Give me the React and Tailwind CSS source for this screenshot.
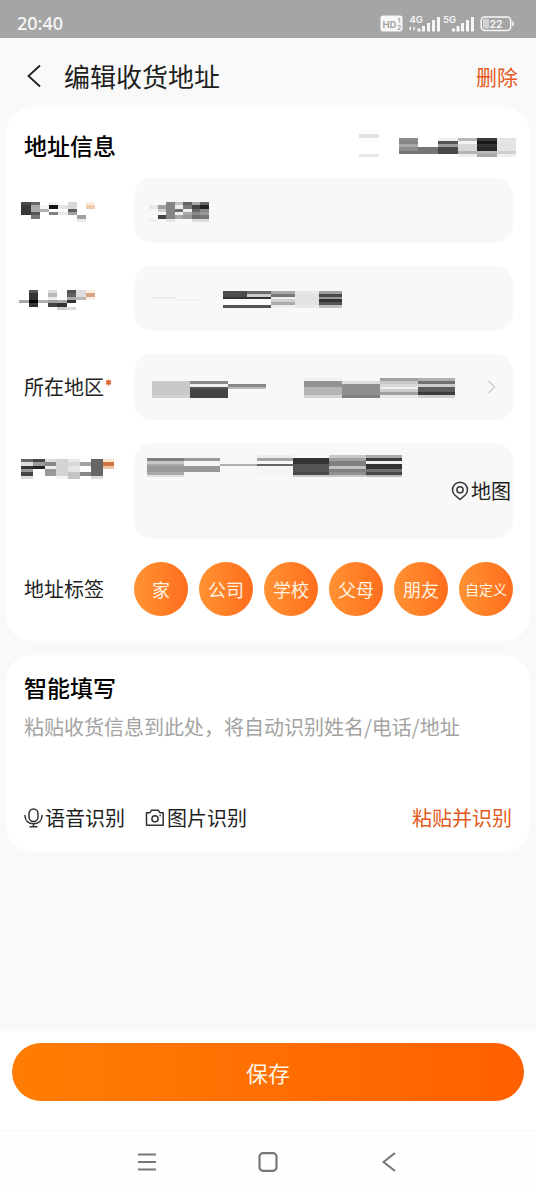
import React from 'react';

// Each block is [left, right, [[top, bottom, shade], ...]] on its own drawing grid.
const HEADER_BLOCKS = [
  [359, 379, [[133, 137, '#e2e2e2'], [153, 156, '#e8e8e8']]],
  [399, 418, [[137, 140, '#8c8c8c'], [140, 143, '#838383'], [143, 146, '#a8a8a8'], [146, 150, '#8c8c8c'], [150, 153, '#757575']]],
  [418, 438, [[146, 153, '#757575']]],
  [438, 458, [[137, 140, '#eeeeee'], [140, 143, '#555555'], [143, 146, '#9c9c9c'], [146, 153, '#484848']]],
  [458, 477, [[137, 140, '#b8b8b8'], [140, 143, '#f2f2f2'], [143, 150, '#d8d8d8'], [150, 153, '#b4b4b4'], [153, 156, '#ececec']]],
  [477, 497, [[137, 140, '#383838'], [140, 143, '#181818'], [143, 146, '#333333'], [146, 150, '#282828'], [150, 153, '#b8b8b8'], [153, 156, '#a8a8a8']]],
  [497, 516, [[137, 150, '#e4e4e4'], [150, 153, '#d0d0d0'], [153, 156, '#eeeeee']]],
];

const NAME_LABEL = [
  [21, 31, [[202, 205, '#4a4a4a'], [205, 215, '#383838']]],
  [31, 40, [[202, 205, '#666666'], [205, 212, '#aaaaaa'], [212, 215, '#555555'], [215, 219, '#777777']]],
  [40, 49, [[205, 209, '#f5f5f5'], [209, 212, '#b0b0b0']]],
  [49, 58, [[202, 205, '#eeeeee'], [205, 209, '#111111'], [212, 215, '#808080']]],
  [58, 68, [[205, 209, '#e5e5e5'], [212, 215, '#e8e8e8']]],
  [68, 77, [[202, 209, '#d8d8d8'], [209, 212, '#606060'], [212, 215, '#a0a0a0']]],
  [77, 86, [[215, 219, '#a0a0a0'], [219, 222, '#eaeaea']]],
  [86, 95, [[202, 205, '#fbeee0'], [205, 209, '#f0ccaa']]],
];

const NAME_VALUE = [
  [149, 158, [[205, 209, '#e8e8e8'], [219, 222, '#eeeeee']]],
  [158, 166, [[205, 209, '#a0a0a0'], [209, 212, '#d0d0d0'], [215, 219, '#444444']]],
  [166, 175, [[202, 219, '#858585'], [219, 222, '#e5e5e5']]],
  [175, 183, [[202, 205, '#c0c0c0'], [205, 209, '#eeeeee'], [209, 212, '#707070'], [212, 215, '#eeeeee'], [215, 219, '#a8a8a8']]],
  [183, 192, [[202, 205, '#606060'], [205, 209, '#777777'], [209, 212, '#eeeeee'], [212, 215, '#aaaaaa'], [215, 219, '#999999']]],
  [192, 200, [[202, 205, '#aaaaaa'], [205, 209, '#444444'], [209, 212, '#666666'], [212, 215, '#888888'], [215, 219, '#707070'], [219, 222, '#dddddd']]],
  [200, 209, [[202, 205, '#666666'], [205, 209, '#222222'], [209, 212, '#888888'], [212, 215, '#999999'], [215, 219, '#777777'], [219, 222, '#dddddd']]],
];

const PHONE_LABEL = [
  [19, 29, [[300, 303, '#a8a8a8']]],
  [29, 38, [[290, 293, '#555555'], [293, 300, '#333333'], [300, 303, '#000000'], [303, 307, '#333333']]],
  [38, 48, [[300, 303, '#b0b0b0']]],
  [48, 57, [[290, 293, '#dddddd'], [293, 297, '#b8b8b8'], [297, 300, '#ececec'], [300, 303, '#a0a0a0'], [303, 307, '#444444']]],
  [57, 67, [[300, 303, '#a8a8a8'], [303, 307, '#333333'], [307, 310, '#cccccc']]],
  [67, 76, [[290, 293, '#505050'], [293, 297, '#606060'], [297, 300, '#aaaaaa'], [300, 303, '#333333'], [307, 310, '#d8d8d8']]],
  [76, 86, [[290, 297, '#dddddd'], [297, 300, '#b8b8b8']]],
  [86, 95, [[290, 293, '#fdeee2'], [293, 297, '#dba585'], [297, 300, '#fdeee2']]],
];

const PHONE_VALUE = [
  [151, 175, [[297, 299, '#eaeaea']]],
  [175, 199, [[299, 301, '#f2f2f2']]],
  [223, 247, [[291, 297, '#4c4c4c'], [297, 299, '#333333'], [299, 305, '#fdfbfc'], [305, 308, '#555555']]],
  [247, 271, [[291, 294, '#6a6a6a'], [294, 297, '#cccccc'], [297, 299, '#333333'], [299, 305, '#fdfbfc'], [305, 308, '#555555']]],
  [271, 295, [[291, 294, '#aaaaaa'], [294, 297, '#777777'], [297, 299, '#eeeeee'], [299, 302, '#d0d0d0'], [302, 305, '#aaaaaa'], [305, 308, '#eeeeee']]],
  [295, 319, [[291, 294, '#e8e8e8'], [294, 305, '#e2e2e2'], [305, 308, '#e8e8e8']]],
  [319, 342, [[291, 294, '#a0a0a0'], [294, 297, '#484848'], [297, 299, '#999999'], [299, 302, '#333333'], [302, 305, '#555555'], [305, 308, '#c0c0c0']]],
];

const REGION_VALUE = [
  [152, 190, [[381, 384, '#cccccc'], [384, 395, '#c8c8c8'], [395, 398, '#d2d2d2']]],
  [190, 228, [[381, 384, '#888888'], [384, 387, '#eeeeee'], [387, 389, '#555555'], [389, 398, '#444444']]],
  [228, 266, [[384, 387, '#888888'], [387, 389, '#b8b8b8']]],
  [304, 342, [[378, 381, '#f0f0f0'], [381, 387, '#939393'], [387, 395, '#b4b4b4'], [395, 398, '#d2d2d2']]],
  [342, 380, [[381, 384, '#dddddd'], [384, 395, '#8e8e8e'], [395, 398, '#808080']]],
  [380, 418, [[378, 381, '#a0a0a0'], [381, 384, '#c8c8c8'], [384, 387, '#d8d8d8'], [387, 389, '#eeeeee'], [389, 392, '#cccccc'], [392, 395, '#a0a0a0'], [395, 398, '#e8e8e8']]],
  [418, 455, [[378, 381, '#b0b0b0'], [381, 384, '#707070'], [384, 387, '#cccccc'], [387, 392, '#5c5c5c'], [392, 395, '#3c3c3c'], [395, 398, '#d0d0d0']]],
];

const DETAIL_LABEL = [
  [21, 33, [[459, 462, '#666666'], [462, 466, '#dddddd'], [466, 469, '#333333'], [469, 472, '#999999'], [472, 476, '#444444'], [476, 479, '#dddddd']]],
  [33, 45, [[459, 462, '#444444'], [462, 466, '#999999'], [466, 469, '#222222']]],
  [45, 56, [[459, 462, '#dddddd'], [462, 466, '#888888'], [466, 469, '#eeeeee'], [469, 476, '#999999']]],
  [56, 68, [[459, 476, '#d4d4d4'], [476, 479, '#f3f3f3']]],
  [68, 80, [[459, 462, '#e8e8e8'], [462, 466, '#d8d8d8'], [466, 472, '#e5e5e5'], [472, 479, '#c4c4c4']]],
  [80, 91, [[462, 466, '#a0a0a0'], [472, 476, '#888888']]],
  [91, 103, [[459, 476, '#666666'], [476, 479, '#dddddd']]],
  [103, 114, [[459, 462, '#fbe4d0'], [462, 466, '#cf7440'], [466, 469, '#eec4a8']]],
];

const DETAIL_VALUE = [
  [147, 184, [[458, 461, '#808080'], [461, 464, '#c8c8c8'], [464, 466, '#aaaaaa'], [466, 472, '#999999'], [472, 475, '#aaaaaa'], [475, 477, '#e0e0e0']]],
  [184, 220, [[458, 461, '#999999'], [461, 466, '#f5f5f5'], [466, 472, '#999999']]],
  [220, 257, [[464, 466, '#b0b0b0']]],
  [257, 293, [[455, 458, '#eeeeee'], [458, 461, '#a4a4a4'], [464, 466, '#666666'], [466, 477, '#f5f5f5']]],
  [293, 329, [[458, 464, '#333333'], [464, 472, '#555555'], [472, 475, '#484848'], [475, 477, '#cccccc']]],
  [329, 366, [[455, 458, '#c8c8c8'], [458, 461, '#a0a0a0'], [461, 466, '#808080'], [466, 469, '#c0c0c0'], [469, 472, '#808080'], [472, 475, '#909090'], [475, 477, '#c8c8c8']]],
  [366, 402, [[455, 458, '#aaaaaa'], [458, 461, '#3c3c3c'], [461, 464, '#eeeeee'], [464, 469, '#333333'], [469, 472, '#707070'], [472, 475, '#484848'], [475, 477, '#bbbbbb']]],
];

function Mosaic({ box, blocks, className = '' }) {
  const [x, y, w, h] = box;
  return (
    <svg
      className={`block shrink-0 ${className}`}
      width={w}
      height={h}
      viewBox={`${x} ${y} ${w} ${h}`}
      shapeRendering="crispEdges"
      aria-hidden="true"
    >
      {blocks.map(([left, right, bands]) =>
        bands.map(([top, bottom, fill]) => (
          <rect key={`${left}-${top}`} x={left} y={top} width={right - left} height={bottom - top} fill={fill} />
        ))
      )}
    </svg>
  );
}

function StatusIcons() {
  return (
    <svg width="134" height="20" viewBox="380 12 134 20" fill="#f7f7f7" fontFamily="Inter, sans-serif" aria-hidden="true">
      <rect x="380.500" y="14.500" width="22" height="16" rx="2.500" />
      <g fill="#a5a5a5" fontWeight="700">
        <text x="382.500" y="26.500" fontSize="9.500">HD</text>
        <text x="397.500" y="21.500" fontSize="6.500">1</text>
        <text x="397" y="29" fontSize="6.500">2</text>
      </g>
      <g fontSize="9.500" fontWeight="600">
        <text x="409.500" y="22">4G</text>
        <text x="443" y="22">5G</text>
      </g>
      <path d="M409 27.500l2-2.500v5zM415.500 27.500l-2-2.500v5z" />
      <path d="M417.500 27.500h3v3h-3zM422 25h3v5.500h-3zM427 22h3v8.500h-3zM432 19h3v11.500h-3zM437 16h3v14.500h-3z" />
      <path d="M452 27.500h3v3h-3zM456.500 25h3v5.500h-3zM461 22h3v8.500h-3zM466 19h3v11.500h-3zM471 16h3v14.500h-3z" />
      <rect x="481.200" y="16" width="29.500" height="13.500" rx="3.500" fill="none" stroke="#f7f7f7" strokeWidth="1.500" />
      <rect x="483" y="18" width="6" height="9.500" rx="1" opacity=".55" />
      <path d="M512.200 20.500h1.500v4.500h-1.500z" />
      <text x="489.500" y="26.700" fontSize="10.500" fontWeight="600">22</text>
    </svg>
  );
}

function PinIcon() {
  return (
    <svg width="18" height="20" viewBox="0 0 18 20" fill="none" stroke="#333" strokeWidth="1.500" strokeLinejoin="round" aria-hidden="true">
      <path d="M9 18.500 4 14.300A7.500 7.500 0 1 1 14 14.300Z" />
      <circle cx="9" cy="8.800" r="3.100" />
    </svg>
  );
}

function MicIcon() {
  return (
    <svg width="20" height="20" viewBox="0 0 20 20" fill="none" stroke="#333" strokeWidth="1.500" strokeLinecap="round" aria-hidden="true">
      <rect x="5" y="1" width="9" height="12.500" rx="4.500" />
      <path d="M1 7.500c0 5.300 3.600 8.200 8.500 8.200S18 12.800 18 7.500M9.500 15.700v3M6 18.800h7" />
    </svg>
  );
}

function CameraIcon() {
  return (
    <svg width="20" height="20" viewBox="0 0 20 20" fill="none" stroke="#333" strokeWidth="1.500" strokeLinejoin="round" aria-hidden="true">
      <path d="M1.500 4.800h3.300l1.700-2.600h6.800L15 4.800h3.200v12.400H1.500Z" />
      <circle cx="10" cy="10.800" r="3.100" />
      <path d="M14.500 7.500h1.500" />
    </svg>
  );
}

const TAGS = ['家', '公司', '学校', '父母', '朋友', '自定义'];

function Row({ label, htmlFor, top, children }) {
  return (
    <div className={`flex ${top ? 'items-start' : 'items-center'}`}>
      <label htmlFor={htmlFor} className="w-[110px] shrink-0 text-xl leading-7">
        {label}
      </label>
      <div className="min-w-0 flex-1">{children}</div>
    </div>
  );
}

export default function App() {
  return (
    <div className="flex min-h-screen flex-col bg-[#f9f9f9] font-['Noto_Sans_CJK_SC','Noto_Sans',sans-serif] text-[#1f1f1f]">
      <div className="flex h-[38px] items-center justify-between bg-[#a5a5a5] pt-2 pr-[22px] pl-[17px]">
        <span className="font-['Noto_Sans',sans-serif] text-lg leading-6 font-medium text-[#f7f7f7]">20:40</span>
        <StatusIcons />
      </div>

      <header className="flex h-[69px] items-center pt-1.5 pr-[18px] pb-0 pl-[26px]">
        <button type="button" aria-label="返回" className="mr-[22px] py-2">
          <svg width="16" height="24" viewBox="0 0 16 24" fill="none" stroke="#222" strokeWidth="1.800" aria-hidden="true">
            <path d="M14 1.500 2.500 12 14 22.500" />
          </svg>
        </button>
        <h1 className="flex-1 text-[26px] leading-9">编辑收货地址</h1>
        <button type="button" className="text-[21px] leading-8 text-[#e35a1c]">删除</button>
      </header>

      <main className="flex flex-1 flex-col gap-3.5 px-1.5">
        <section className="rounded-[26px] bg-white pt-5 pb-[25px]">
          <div className="flex items-center justify-between pr-3.5 pl-[18px]">
            <h2 className="text-[23px] leading-9 font-medium text-black">地址信息</h2>
            <Mosaic box={[359, 133, 157, 23]} blocks={HEADER_BLOCKS} />
          </div>

          <div className="mt-[15px] flex flex-col gap-[23px] pr-[17px] pl-[18px]">
            <Row htmlFor="name" label={<Mosaic className="-ml-[5px]" box={[19, 199, 96, 23]} blocks={NAME_LABEL} />}>
              <div className="flex h-[65px] items-center rounded-[18px] bg-[#f8f8f8] px-[13px]">
                <Mosaic box={[147, 199, 64, 23]} blocks={NAME_VALUE} />
                <input id="name" type="text" aria-label="姓名" className="min-w-0 flex-1 bg-transparent text-xl outline-none" />
              </div>
            </Row>

            <Row htmlFor="phone" label={<Mosaic className="-ml-[5px]" box={[19, 287, 96, 23]} blocks={PHONE_LABEL} />}>
              <div className="flex h-[65px] items-center rounded-[18px] bg-[#f8f8f8] px-[13px]">
                <Mosaic box={[147, 289, 196, 19]} blocks={PHONE_VALUE} />
                <input id="phone" type="tel" aria-label="电话" className="min-w-0 flex-1 bg-transparent text-xl outline-none" />
              </div>
            </Row>

            <Row
              htmlFor="region"
              label={
                <span className="flex items-start">
                  所在地区
                  <svg width="8" height="20" viewBox="0 0 8 20" stroke="#d9602a" strokeWidth="1.600" aria-hidden="true">
                    <path d="M4.500 6.500v6M2 8l5 3M7 8l-5 3" />
                  </svg>
                </span>
              }
            >
              <button
                id="region"
                type="button"
                className="flex h-[66px] w-full items-center justify-between rounded-[18px] bg-[#f8f8f8] pr-[17px] pl-[13px]"
              >
                <Mosaic box={[147, 377, 310, 21]} blocks={REGION_VALUE} />
                <svg width="9" height="14" viewBox="0 0 9 14" fill="none" stroke="#cfcfcf" strokeWidth="1.600" aria-hidden="true">
                  <path d="M1.500 1 7.500 7 1.500 13" />
                </svg>
              </button>
            </Row>

            <Row top htmlFor="detail" label={<Mosaic className="mt-4 -ml-[5px]" box={[19, 459, 96, 20]} blocks={DETAIL_LABEL} />}>
              <div className="flex h-24 items-center rounded-[18px] bg-[#f8f8f8] pr-0.5 pl-[13px]">
                <Mosaic className="mt-3 self-start" box={[147, 455, 256, 22]} blocks={DETAIL_VALUE} />
                <textarea id="detail" aria-label="详细地址" className="h-full min-w-0 flex-1 resize-none bg-transparent text-xl outline-none" />
                <button type="button" className="flex shrink-0 items-center gap-0.5 text-xl leading-7">
                  <PinIcon />
                  地图
                </button>
              </div>
            </Row>

            <div className="flex items-center">
              <span id="tags" className="w-[110px] shrink-0 text-xl leading-7">地址标签</span>
              <div role="group" aria-labelledby="tags" className="flex min-w-0 flex-1 justify-between">
                {TAGS.map((tag) => (
                  <button
                    key={tag}
                    type="button"
                    className={`flex size-[54px] items-center justify-center rounded-full bg-linear-to-r from-[#ff9232] to-[#ff6d1c] text-[#fff3e2] ${
                      tag.length > 2 ? 'text-sm' : 'text-lg'
                    }`}
                  >
                    {tag}
                  </button>
                ))}
              </div>
            </div>
          </div>
        </section>

        <section className="rounded-[26px] bg-white px-[18px] pt-3.5 pb-5">
          <h2 className="text-[23px] leading-9 font-medium text-black">
            <label htmlFor="smart">智能填写</label>
          </h2>
          <textarea
            id="smart"
            placeholder="粘贴收货信息到此处，将自动识别姓名/电话/地址"
            className="mt-2 block h-[91px] w-full resize-none bg-transparent text-xl leading-7 outline-none placeholder:text-[#a3a3a3]"
          />
          <div className="flex items-center text-xl leading-7">
            <button type="button" className="flex items-center gap-px">
              <MicIcon />
              语音识别
            </button>
            <button type="button" className="ml-5 flex items-center gap-0.5">
              <CameraIcon />
              图片识别
            </button>
            <button type="button" className="ml-auto text-[#e35a1c]">粘贴并识别</button>
          </div>
        </section>
      </main>

      <div className="border-b border-[#f5f5f5] bg-white px-3 pt-3 pb-[29px]">
        <button
          type="submit"
          className="h-[58px] w-full rounded-full bg-linear-to-r from-[#ff7d04] to-[#ff5f00] text-[22px] leading-8 text-[#fff3e2]"
        >
          保存
        </button>
      </div>

      <nav className="flex h-[62px] items-center justify-center gap-[100px] bg-[#fefefe]">
        <button type="button" aria-label="菜单">
          <svg width="20" height="20" viewBox="0 0 20 20" stroke="#777" strokeWidth="2.200" aria-hidden="true">
            <path d="M1 2.500h18M1 10h18M1 17.500h18" />
          </svg>
        </button>
        <button type="button" aria-label="主页">
          <svg width="22" height="20" viewBox="0 0 22 20" fill="none" stroke="#777" strokeWidth="2.200" aria-hidden="true">
            <rect x="2.500" y="1.200" width="17" height="17.600" rx="3.500" />
          </svg>
        </button>
        <button type="button" aria-label="后退">
          <svg width="20" height="20" viewBox="0 0 20 20" fill="none" stroke="#777" strokeWidth="2.200" strokeLinejoin="round" aria-hidden="true">
            <path d="M16 1 4.500 10 16 19" />
          </svg>
        </button>
      </nav>
    </div>
  );
}
